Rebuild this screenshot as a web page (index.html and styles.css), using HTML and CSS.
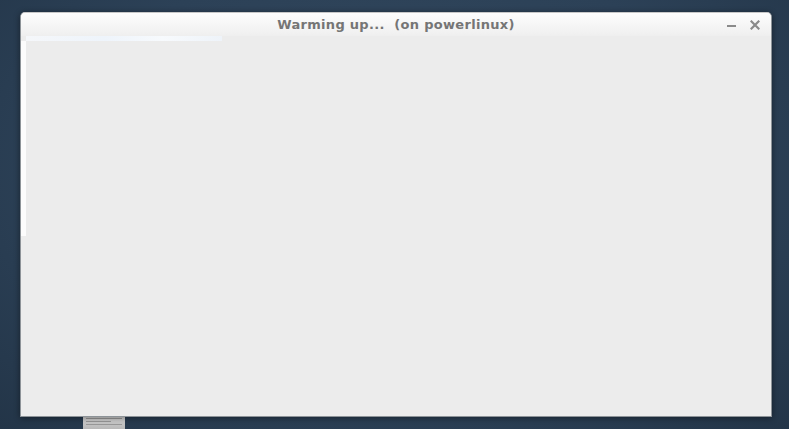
FILE: index.html
```html
<!DOCTYPE html>
<html>
<head>
<meta charset="utf-8">
<link rel="stylesheet" href="styles.css">
</head>
<body>
<div class="desktop">
  <div class="thumb">
    <div class="tline"></div><div class="tline short"></div><div class="tline"></div>
  </div>
  <div class="window">
    <div class="titlebar">
      <span class="title">Warming up...&nbsp; (on powerlinux)</span>
      <div class="controls">
        <svg class="btn" width="10" height="10" viewBox="0 0 10 10"><rect x="0" y="5" width="9" height="2" fill="#8a8a8a"/></svg>
        <svg class="btn" width="10" height="10" viewBox="0 0 10 10"><path d="M1.5 1.5 L8.5 8.5 M8.5 1.5 L1.5 8.5" stroke="#8a8a8a" stroke-width="2.2" stroke-linecap="square"/></svg>
      </div>
    </div>
    <div class="content">
      <div class="topline"></div>
      <div class="body">
        <div class="leftstrip"></div>
      </div>
    </div>
  </div>
</div>
</body>
</html>
```
FILE: styles.css
```css
html, body { margin: 0; padding: 0; }
body {
  width: 789px; height: 429px; overflow: hidden;
  background: #2d4258;
  font-family: "DejaVu Sans", sans-serif;
}
.desktop {
  position: relative; width: 789px; height: 429px;
  background: radial-gradient(ellipse at 50% 40%, #33495f 0%, #2c4157 60%, #233548 100%);
}
.window {
  position: absolute; left: 20px; top: 12px;
  width: 752px; height: 405px;
  box-sizing: border-box;
  border: 1px solid #8d9398;
  border-top-color: #c8c8c8;
  border-radius: 5px 5px 0 0;
  background: #ececec;
  display: flex; flex-direction: column;
  overflow: hidden;
  box-shadow: 0 1px 6px rgba(0,0,0,0.45);
}
.titlebar {
  height: 23px; flex: none;
  background: linear-gradient(#fdfdfd, #efefef);
  position: relative;
  display: flex; align-items: center; justify-content: center;
}
.title {
  font-weight: bold; font-size: 13px; color: #757575;
  letter-spacing: 0.3px;
}
.controls {
  position: absolute; right: 11px; top: 7px;
  display: flex; gap: 13px;
}
.btn { display: block; }
.content { flex: 1; display: flex; flex-direction: column; background: #ececec; }
.topline {
  height: 5px; width: 196px; margin-left: 5px;
  background: linear-gradient(90deg, #f5f7fa 0%, #eef4fb 40%, #f7fafd 70%, #eef3f9 100%);
}
.body { flex: 1; }
.leftstrip { width: 5px; height: 195px; background: #fcfcfc; }
.thumb {
  position: absolute; left: 83px; top: 414px;
  width: 42px; height: 15px;
  background: linear-gradient(#dcdcdc, #b8b8b8);
  padding: 4px 3px 0; box-sizing: border-box;
  display: flex; flex-direction: column; gap: 2px;
}
.tline { height: 1px; background: #999; }
.tline.short { width: 70%; }
```
